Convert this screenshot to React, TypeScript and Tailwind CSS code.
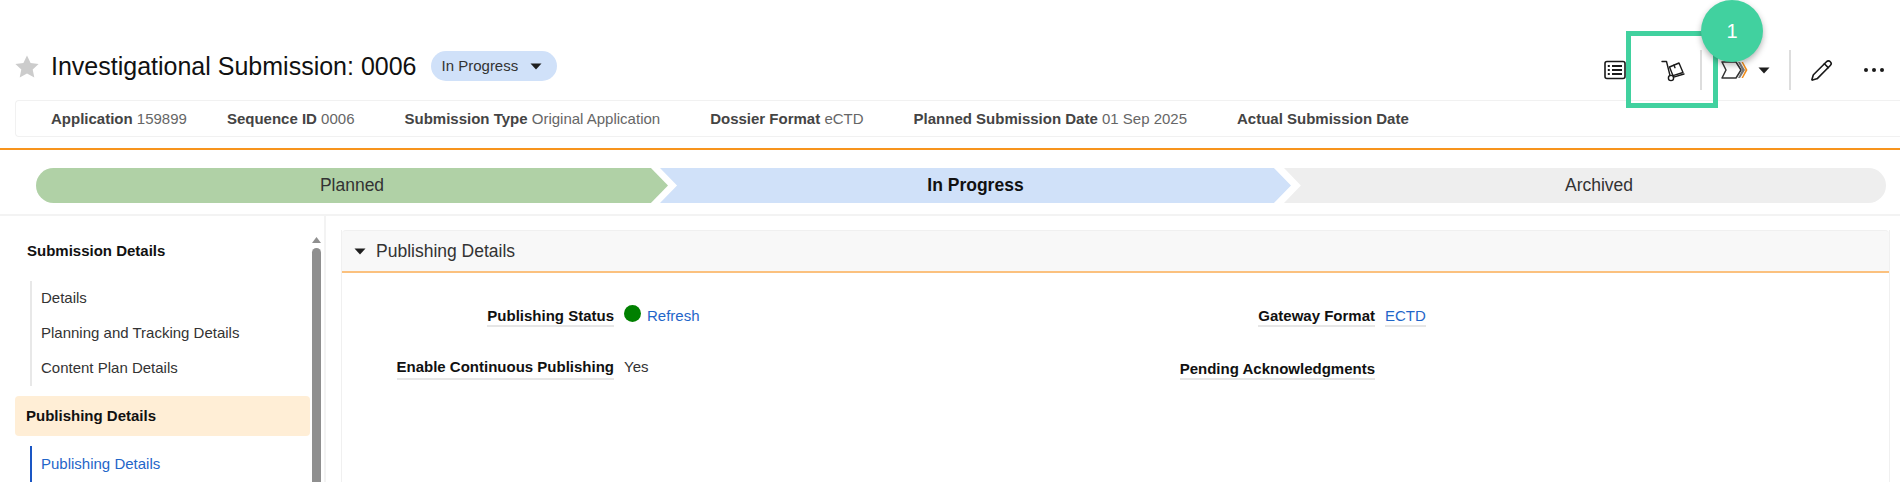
import { Pencil } from "lucide-react";

const Caret = ({ className = "" }: { className?: string }) => (
  <svg width="12" height="7" viewBox="0 0 12 7" className={className}>
    <path d="M0.5 0.5H11.5L6 6.5Z" fill="#1f1f1f" />
  </svg>
);

const ListIcon = () => (
  <svg width="22" height="20" viewBox="0 0 22 20" fill="none" stroke="#1a1a1a">
    <rect x="1" y="1.5" width="20" height="17" rx="2" strokeWidth="1.6" />
    <path d="M8 6H18M8 10H18M8 14H18" strokeWidth="1.8" />
    <path d="M3.8 6H5.8M3.8 10H5.8M3.8 14H5.8" strokeWidth="1.8" />
  </svg>
);

const TruckIcon = () => (
  <svg width="26" height="24" viewBox="0 0 26 24" fill="none" stroke="#1a1a1a" strokeWidth="1.4" strokeLinejoin="round" strokeLinecap="round">
    <path d="M2 3.5H6.5L10 17.5" />
    <circle cx="11" cy="20" r="2.6" />
    <path d="M13.6 19.2L24 16" />
    <path d="M9.5 9L19 5L23 14.5L13 17.7Z" />
    <path d="M14 7.2L15 9.7" />
  </svg>
);

const StagesIcon = () => (
  <svg width="27" height="18" viewBox="0 0 27 18" fill="none" strokeLinejoin="round">
    <path d="M1 1H15L20 9L15 17H1L5 9Z" stroke="#333333" strokeWidth="1.5" fill="#ffffff" />
    <path d="M17 1H19L24 9L19 17H17L21 9Z" fill="#777777" />
    <path d="M20.5 1H22L26.5 9L22 17H20.5L24.5 9Z" fill="#f08c1a" />
  </svg>
);

const Meta = ({ label, value, className = "" }: { label: string; value?: string; className?: string }) => (
  <div className={`whitespace-nowrap ${className}`}>
    <span className="font-bold text-[#444444]">{label}</span>
    {value && <span className="text-[#666666]"> {value}</span>}
  </div>
);

const Label = ({ children }: { children: string }) => (
  <div className="flex w-[272px] justify-end">
    <span className="border-b-2 border-[#e6e6e6] font-bold leading-[18px] text-[#111111]">{children}</span>
  </div>
);

export default function App() {
  return (
    <div className="relative h-[482px] w-[1900px] overflow-hidden bg-white font-['Liberation_Sans',Arial,sans-serif] text-[15px] text-[#333333]">
      <div className="flex h-[100px] items-center pl-[15px] pr-[16px] pt-[32px]">
        <svg width="24" height="23" viewBox="0 0 24 23">
          <path d="M12 0.5L15.6 8L23.6 8.9L17.7 14.4L19.3 22.4L12 18.4L4.7 22.4L6.3 14.4L0.4 8.9L8.4 8Z" fill="#cccccc" />
        </svg>
        <h1 className="ml-[12px] whitespace-nowrap text-[25px] leading-[30px] text-[#111111]">Investigational Submission: 0006</h1>
        <div className="ml-[14px] flex h-[30px] w-[126px] items-center rounded-full bg-[#d0e1f9] pl-[11px] text-[#333333]">
          <span>In Progress</span>
          <Caret className="ml-[12px]" />
        </div>
        <div className="ml-auto mt-[8px] flex items-center">
          <ListIcon />
          <div className="ml-[34px]"><TruckIcon /></div>
          <div className="ml-[14px] h-[40px] w-[2px] bg-[#dddddd]" />
          <div className="ml-[19px]"><StagesIcon /></div>
          <Caret className="ml-[10px]" />
          <div className="ml-[19px] h-[40px] w-[2px] bg-[#dddddd]" />
          <div className="ml-[19px]"><Pencil size={23} strokeWidth={1.7} color="#1a1a1a" /></div>
          <div className="ml-[31px] flex w-[20px] justify-between">
            <span className="h-[4px] w-[4px] rounded-full bg-[#1a1a1a]" />
            <span className="h-[4px] w-[4px] rounded-full bg-[#1a1a1a]" />
            <span className="h-[4px] w-[4px] rounded-full bg-[#1a1a1a]" />
          </div>
        </div>
      </div>

      <div className="ml-[15px] flex h-[37px] items-center rounded-l border-y border-l border-[#f1f1f1] pl-[35px] pt-[2px]">
        <Meta label="Application" value="159899" />
        <Meta label="Sequence ID" value="0006" className="ml-[40px]" />
        <Meta label="Submission Type" value="Original Application" className="ml-[50px]" />
        <Meta label="Dossier Format" value="eCTD" className="ml-[50px]" />
        <Meta label="Planned Submission Date" value="01 Sep 2025" className="ml-[50px]" />
        <Meta label="Actual Submission Date" className="ml-[50px]" />
      </div>

      <div className="mt-[11px] h-[2px] bg-[#f7941d]" />

      <div className="flex h-[66px] items-center border-b-2 border-[#f3f3f3] pl-[36px] pt-[7px]">
        <div className="flex h-[35px] w-[632px] items-center justify-center rounded-l-full bg-[#b0d1a6] text-[17.5px] text-[#333333] [clip-path:polygon(0_0,97.3%_0,100%_50%,97.3%_100%,0_100%)]">Planned</div>
        <div className="-ml-[8px] flex h-[35px] w-[631px] items-center justify-center bg-[#d0e1f9] text-[17.5px] font-bold text-[#111111] [clip-path:polygon(0_0,97.3%_0,100%_50%,97.3%_100%,0_100%,2.7%_50%)]">In Progress</div>
        <div className="-ml-[7px] flex h-[35px] w-[602px] items-center justify-center rounded-r-full bg-[#eeeeee] pl-[28px] text-[17.5px] text-[#333333] [clip-path:polygon(0_0,100%_0,100%_100%,0_100%,2.8%_50%)]">Archived</div>
      </div>

      <div className="flex h-[267px] overflow-hidden">
        <div className="flex w-[326px] shrink-0 border-r-2 border-[#f3f3f3] pl-[15px]">
          <nav className="w-[295px] shrink-0 pt-[25px]">
            <div className="pl-[12px] font-bold leading-[20px] text-[#111111]">Submission Details</div>
            <div className="ml-[15px] mt-[20px] border-l-2 border-[#e8e8e8] pl-[9px]">
              <div className="flex h-[35px] items-center">Details</div>
              <div className="flex h-[35px] items-center">Planning and Tracking Details</div>
              <div className="flex h-[35px] items-center">Content Plan Details</div>
            </div>
            <div className="mt-[10px] flex h-[40px] items-center rounded-sm bg-[#ffeed6] pl-[11px] font-bold text-[#111111]">Publishing Details</div>
            <div className="ml-[15px] mt-[10px] flex h-[36px] items-center border-l-2 border-[#1a56c4] pl-[9px] text-[#1f66c9]">Publishing Details</div>
          </nav>
          <div className="ml-[2px] flex w-[9px] flex-col items-center pt-[21px]">
            <svg width="9" height="6" viewBox="0 0 9 6"><path d="M4.5 0L9 6H0Z" fill="#8f8f8f" /></svg>
            <div className="mt-[5px] w-[9px] flex-1 rounded-t-full bg-[#8f8f8f]" />
          </div>
        </div>

        <div className="ml-[15px] mr-[10px] mt-[14px] flex-1 border-x border-[#f0f0f0]">
          <div className="flex h-[43px] items-center rounded-t border-b-2 border-t border-[#f0f0f0] border-b-[#fbc17e] bg-[#f8f8f8] pl-[12px] pt-[1px] text-[17.5px] text-[#333333]">
            <Caret />
            <span className="ml-[10px]">Publishing Details</span>
          </div>
          <div className="pt-[34px]">
            <div className="flex h-[20px]">
              <div className="flex w-[761px]">
                <Label>Publishing Status</Label>
                <div className="ml-[10px] flex items-start">
                  <span className="-mt-[2px] h-[17px] w-[17px] rounded-full bg-[#008000]" />
                  <span className="ml-[6px] leading-[18px] text-[#1f66c9]">Refresh</span>
                </div>
              </div>
              <div className="flex">
                <Label>Gateway Format</Label>
                <span className="ml-[10px] border-b-2 border-[#e6e6e6] leading-[18px] text-[#1f66c9]">ECTD</span>
              </div>
            </div>
            <div className="mt-[31px] flex">
              <div className="flex w-[761px]">
                <Label>Enable Continuous Publishing</Label>
                <span className="ml-[10px] leading-[18px]">Yes</span>
              </div>
              <div className="mt-[2px] flex">
                <Label>Pending Acknowledgments</Label>
              </div>
            </div>
          </div>
        </div>
      </div>

      <div className="absolute left-[1626px] top-[31px] h-[77px] w-[92px] border-[5px] border-[#41d19f]" />
      <div className="absolute left-[1701px] top-0 flex h-[62px] w-[62px] items-center justify-center rounded-full bg-[#41d19f] text-[20px] text-white shadow-[0_3px_6px_rgba(0,0,0,0.3)]">1</div>
    </div>
  );
}
